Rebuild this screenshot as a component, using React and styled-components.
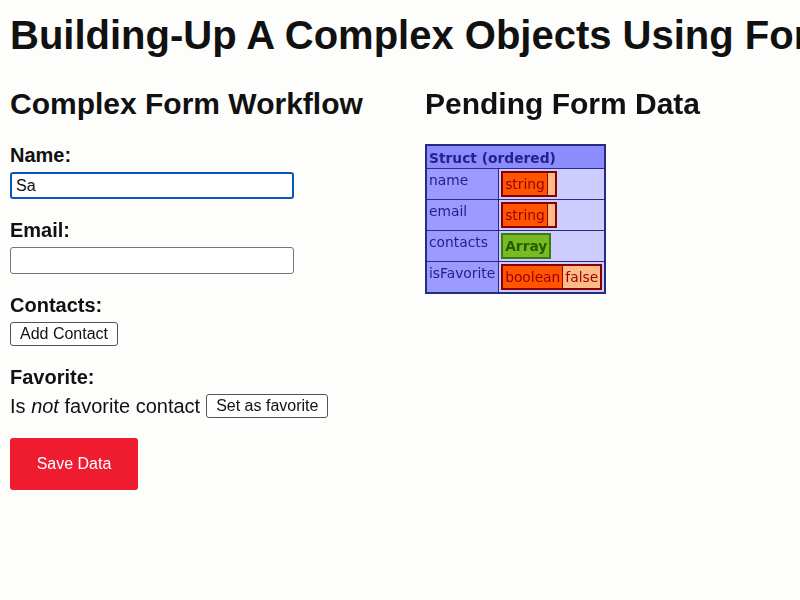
import styled, { createGlobalStyle } from "styled-components";

const GlobalStyle = createGlobalStyle`
  body {
    margin: 0;
    background: #fdfdfb;
    font-family: "Liberation Sans", Arial, sans-serif;
    color: #111;
  }
`;

const Page = styled.div`
  padding: 0 10px;
  overflow: hidden;
`;

const Title = styled.h1`
  font-size: 40px;
  line-height: 46px;
  font-weight: 700;
  margin: 12px 0 28px;
  white-space: nowrap;
`;

const Columns = styled.div`
  display: flex;
  align-items: flex-start;
`;

const FormColumn = styled.div`
  width: 415px;
  flex-shrink: 0;
`;

const DataColumn = styled.div`
  flex: 1;
`;

const SectionTitle = styled.h2`
  font-size: 30px;
  line-height: 35px;
  font-weight: 700;
  margin: 0 0 23px;
`;

const Field = styled.div`
  margin-bottom: 20px;
`;

const Label = styled.div`
  font-size: 20px;
  line-height: 23px;
  font-weight: 700;
  margin-bottom: 5px;
`;

const TextInput = styled.input`
  display: block;
  box-sizing: border-box;
  width: 284px;
  height: 27px;
  padding: 2px 4px;
  font-family: "Liberation Sans", Arial, sans-serif;
  font-size: 16px;
  border-radius: 3px;
  background: #fff;
  color: #111;
  caret-color: #111;
  border: ${(p) => (p.$focused ? "2px solid #0b57b8" : "1px solid #767676")};
  outline: none;
`;

const SmallButton = styled.button`
  height: 24px;
  font-family: "Liberation Sans", Arial, sans-serif;
  font-size: 16px;
  padding: 0 9px;
  background: #fff;
  border: 1px solid #555;
  border-radius: 3px;
  color: #111;
`;

const FavoriteLine = styled.div`
  font-size: 20px;
  line-height: 23px;
  display: flex;
  align-items: center;
  gap: 6px;
`;

const SaveButton = styled.button`
  width: 128px;
  height: 52px;
  background: #ee1c2e;
  color: #fff;
  border: none;
  border-radius: 3px;
  font-family: "Liberation Sans", Arial, sans-serif;
  font-size: 16px;
`;

const Dump = styled.table`
  border-collapse: collapse;
  border: 2px solid #2a2a80;
  font-family: "DejaVu Sans", Verdana, sans-serif;
  font-size: 13.8px;
  color: #222288;
`;

const DumpHead = styled.th`
  background: #8c8cff;
  text-align: left;
  font-weight: 700;
  height: 20px;
  line-height: 18px;
  padding: 2px 2px 0;
  border: 1px solid #2a2a80;
`;

const KeyCell = styled.td`
  background: #9a9aff;
  vertical-align: top;
  padding: 3px 3px 0 2px;
  border: 1px solid #2a2a80;
`;

const ValueCell = styled.td`
  background: #ccccff;
  vertical-align: top;
  height: 26px;
  padding: 2px 2px 2px 2px;
  border: 1px solid #2a2a80;
  width: 99px;
`;

const Tag = styled.span`
  display: inline-flex;
  align-items: stretch;
  border: 2px solid ${(p) => p.$border};
  background: ${(p) => p.$bg};
  color: ${(p) => p.$color};
  font-weight: ${(p) => (p.$bold ? 700 : 400)};
  line-height: 22px;
`;

const TagName = styled.span`
  padding: 0 2px;
`;

const TagValue = styled.span`
  background: #ffbb88;
  border-left: 1px solid #990000;
  padding: 0 2px;
  min-width: 3px;
`;

function TypeTag({ type, value }) {
  if (type === "Array") {
    return (
      <Tag $bg="#77bb22" $border="#3f7a10" $color="#2b5a00" $bold>
        <TagName>Array</TagName>
      </Tag>
    );
  }
  return (
    <Tag $bg="#ff5500" $border="#880000" $color="#990000">
      <TagName>{type}</TagName>
      <TagValue>{value}</TagValue>
    </Tag>
  );
}

const rows = [
  { key: "name", type: "string", value: "" },
  { key: "email", type: "string", value: "" },
  { key: "contacts", type: "Array" },
  { key: "isFavorite", type: "boolean", value: "false" },
];

export default function App() {
  return (
    <Page>
      <GlobalStyle />
      <Title>Building-Up A Complex Objects Using Form Workflow</Title>
      <Columns>
        <FormColumn>
          <SectionTitle>Complex Form Workflow</SectionTitle>
          <Field>
            <Label>Name:</Label>
            <TextInput $focused defaultValue="Sa" autoFocus />
          </Field>
          <Field>
            <Label>Email:</Label>
            <TextInput />
          </Field>
          <Field>
            <Label>Contacts:</Label>
            <SmallButton>Add Contact</SmallButton>
          </Field>
          <Field>
            <Label>Favorite:</Label>
            <FavoriteLine>
              <span>
                Is <em>not</em> favorite contact
              </span>
              <SmallButton>Set as favorite</SmallButton>
            </FavoriteLine>
          </Field>
          <SaveButton>Save Data</SaveButton>
        </FormColumn>
        <DataColumn>
          <SectionTitle>Pending Form Data</SectionTitle>
          <Dump>
            <thead>
              <tr>
                <DumpHead colSpan={2}>Struct (ordered)</DumpHead>
              </tr>
            </thead>
            <tbody>
              {rows.map((r) => (
                <tr key={r.key}>
                  <KeyCell>{r.key}</KeyCell>
                  <ValueCell>
                    <TypeTag type={r.type} value={r.value} />
                  </ValueCell>
                </tr>
              ))}
            </tbody>
          </Dump>
        </DataColumn>
      </Columns>
    </Page>
  );
}
